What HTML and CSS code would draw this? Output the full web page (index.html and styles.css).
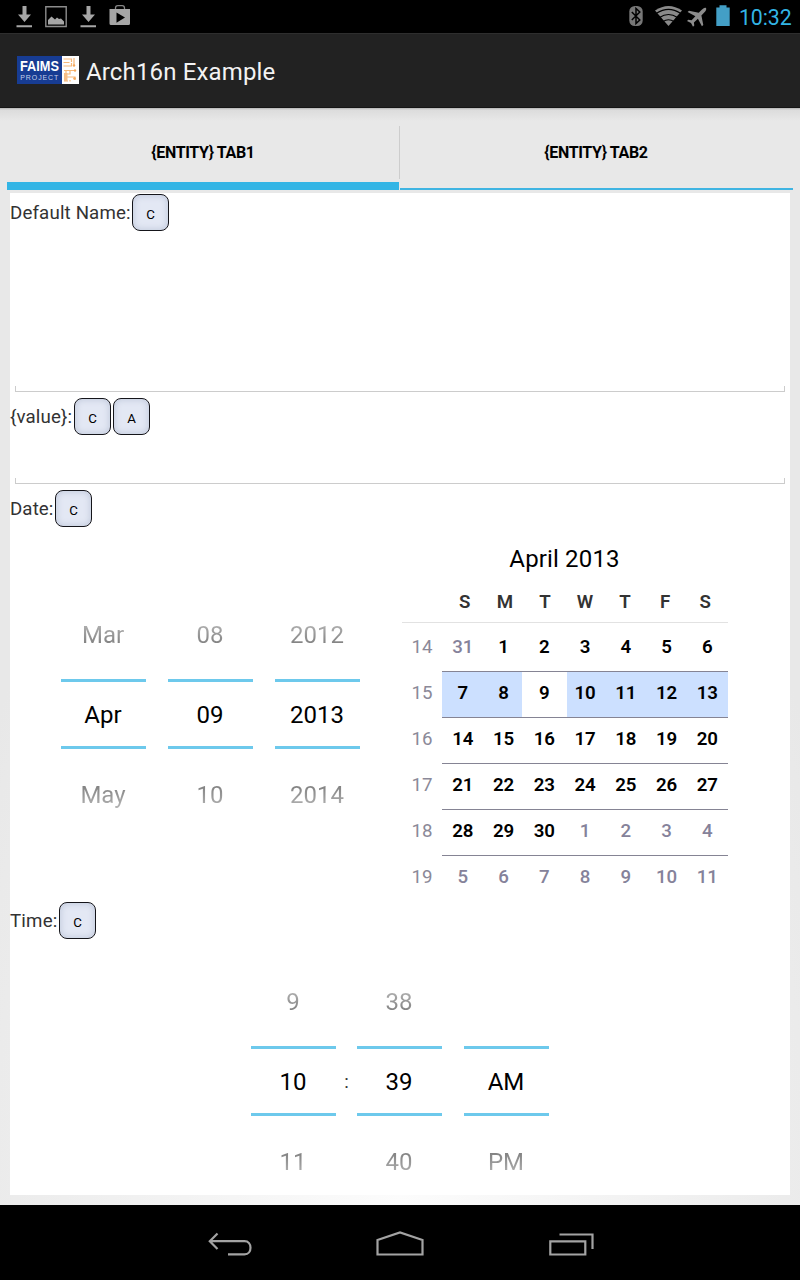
FILE: index.html
```
<!DOCTYPE html>
<html lang="en">
<head>
<meta charset="utf-8">
<title>Arch16n Example</title>
<link rel="stylesheet" href="styles.css">
</head>
<body>
<div class="screen">
  <header class="status">
    <svg class="status-left" width="140" height="33" viewBox="0 0 140 33" fill="#a6a6a6">
      <path d="M22.5 6h4v8.500H31L24.500 22 18 14.500h4.500zM16.500 25.300h15.500v2H16.500z"/>
      <path d="M86.500 6h4v8.500H95L88.500 22 82 14.500h4.500zM80.500 25.300h15.500v2H80.500z"/>
      <path d="M45.800 6.700h20.400v19.800H45.800z" fill="none" stroke="#8c8c8c" stroke-width="1.400"/>
      <path d="M48 24.500V20l3.500-3.500 3.500 3 2-2 2 1.500 2-.5 3 3v3z"/>
      <path d="M115.500 9.500V8q0-2.300 2.300-2.300h4.400q2.300 0 2.300 2.300v1.500" fill="none" stroke="#858585" stroke-width="1.300"/>
      <path fill-rule="evenodd" d="M109.500 9h20.500v14.500q0 1.500-1.500 1.500H111q-1.500 0-1.500-1.500zM116.500 12.500v10.300l8.500-5.200z"/>
    </svg>
    <div class="status-right">
      <svg width="110" height="33" viewBox="625 0 110 33">
        <rect x="629.300" y="6" width="13.400" height="20" rx="5.500" fill="#777"/>
        <path d="M631.800 12l8 8-3.800 3.500v-15l3.800 3.500-8 8" fill="none" stroke="#000" stroke-width="1.500"/>
        <path d="M655 10.500Q668.500 1.500 682 10.500L668.500 26z" fill="#8a8a8a"/>
        <path d="M656.500 13.300q12-8 24 0M659.500 17.500q9-6 18 0M663 21.500q5.500-3.500 11 0" fill="none" stroke="#000" stroke-width="1.200"/>
        <path d="M706 8c-1.300-1-3 .5-4.500 2l-2.800 2.700-9.700-2-1.400 1.400 7.800 4.100-3.800 4-3.300-.4-1.300 1.200 4 2 2 3.800 1.300-1.200-.4-3.200 4-3.700 4 7.600 1.400-1.300-1.900-9.500 2.800-2.900c1.400-1.500 2.700-3.300 1.800-4.600z" fill="#8c8c8c"/>
        <path d="M716.300 7.500h3.200V5.300h7v2.200h3.200V26h-13.400z" fill="#439fc6"/>
      </svg>
      <span class="clock">10:32</span>
    </div>
  </header>

  <div class="actionbar">
    <svg width="62" height="28" viewBox="0 0 62 28">
      <path fill="#173c93" d="M0 0h45v28H0z"/>
      <path fill="#fff" d="M45 0h17v28H45z"/>
      <text class="logo-main" x="3" y="14.800" textLength="39" lengthAdjust="spacingAndGlyphs">FAIMS</text>
      <text class="logo-sub" x="3.300" y="23.500" textLength="38">PROJECT</text>
      <path d="M46.500 3h8v3M46.500 6.500h6M46.500 10h8V7M57 2v8M49 14v11M47 14.500h11M47 18h6v-3M49 21h9v3M47 25h4M53 24v1.500" fill="none" stroke="#f7b878" stroke-width="1.200"/>
      <path d="M47 17h3.500v8H47z" fill="#f8bf86"/>
      <circle cx="57" cy="9.500" r="1.200" fill="#f5a85c"/><circle cx="58" cy="14.500" r="1.200" fill="#f5a85c"/><circle cx="57.500" cy="22.500" r="1.300" fill="#f5a85c"/>
    </svg>
    <span class="title">Arch16n Example</span>
  </div>

  <main class="content">
    <nav class="tabs">
      <div class="tab tab-active"><span>{ENTITY} TAB1</span></div>
      <div class="divider"></div>
      <div class="tab"><span>{ENTITY} TAB2</span></div>
    </nav>
    <section class="card">
      <div class="label-row"><span class="label label-name">Default Name:</span><span class="key">C</span></div>
      <div class="edit edit-tall"><div class="underline"></div></div>
      <div class="label-row"><span class="label label-value">{value}:</span><span class="key">C</span><span class="key">A</span></div>
      <div class="edit"><div class="underline"></div></div>
      <div class="label-row"><span class="label label-date">Date:</span><span class="key">C</span></div>

      <div class="date">
        <div class="pickers">
          <div class="picker"><div class="prev">Mar</div><div class="current">Apr</div><div class="next">May</div></div>
          <div class="picker"><div class="prev">08</div><div class="current">09</div><div class="next">10</div></div>
          <div class="picker"><div class="prev">2012</div><div class="current">2013</div><div class="next">2014</div></div>
        </div>
        <div class="calendar">
          <div class="month">April 2013</div>
          <div class="weekdays"><span></span><span>S</span><span>M</span><span>T</span><span>W</span><span>T</span><span>F</span><span>S</span></div>
          <div class="week"><b>14</b><div class="days"><i>31</i><span>1</span><span>2</span><span>3</span><span>4</span><span>5</span><span>6</span></div></div>
          <div class="week"><b>15</b><div class="days selected"><span>7</span><span>8</span><span>9</span><span>10</span><span>11</span><span>12</span><span>13</span></div></div>
          <div class="week"><b>16</b><div class="days"><span>14</span><span>15</span><span>16</span><span>17</span><span>18</span><span>19</span><span>20</span></div></div>
          <div class="week"><b>17</b><div class="days"><span>21</span><span>22</span><span>23</span><span>24</span><span>25</span><span>26</span><span>27</span></div></div>
          <div class="week"><b>18</b><div class="days"><span>28</span><span>29</span><span>30</span><i>1</i><i>2</i><i>3</i><i>4</i></div></div>
          <div class="week"><b>19</b><div class="days last"><i>5</i><i>6</i><i>7</i><i>8</i><i>9</i><i>10</i><i>11</i></div></div>
        </div>
      </div>

      <div class="label-row"><span class="label label-time">Time:</span><span class="key">C</span></div>
      <div class="time">
        <div class="picker"><div class="prev">9</div><div class="current">10</div><div class="next">11</div></div>
        <div class="colon">:</div>
        <div class="picker"><div class="prev">38</div><div class="current">39</div><div class="next">40</div></div>
        <div class="picker ampm"><div class="prev"></div><div class="current">AM</div><div class="next">PM</div></div>
      </div>
    </section>
  </main>

  <footer class="navbar">
    <svg width="800" height="75" viewBox="0 1205 800 75" fill="none" stroke="#a3a3a3" stroke-width="2.200">
      <path d="M217.500 1233.500l-7.700 7.700 7.700 7.800M210 1241.200h34.500c8 0 8 13.200 0 13.200H228"/>
      <path d="M377.500 1254.500V1240l22.500-7.500 22.500 7.500v14.500z"/>
      <path d="M550.300 1241.300h35v13.200h-35zM559.500 1234.500h33v14.500"/>
    </svg>
  </footer>
</div>
</body>
</html>
```
FILE: styles.css
```
* { box-sizing: border-box; }
body { margin: 0; font-family: Roboto, "Noto Sans", sans-serif; background: #000; }
svg { display: block; }
.screen { width: 800px; height: 1280px; display: flex; flex-direction: column; overflow: hidden; }

.status { height: 33px; display: flex; justify-content: space-between; background: #000; }
.status-right { display: flex; width: 175px; }
.clock { margin-left: 4px; font-size: 21.3px; line-height: 35px; letter-spacing: -0.1px; color: #33b5e5; white-space: nowrap; }

.actionbar { height: 75px; padding: 0 17px; display: flex; align-items: center; gap: 7px; background: #222; border-top: 1px solid #2e2e2e; border-bottom: 1px solid #151515; }
.actionbar svg { margin-bottom: 1px; }
.title { font-size: 24px; line-height: 30px; letter-spacing: 0.15px; color: #f3f3f3; white-space: nowrap; margin-top: 3px; }
.logo-main { font: 700 14.5px "Liberation Sans", sans-serif; fill: #fff; }
.logo-sub { font: 400 7px "Liberation Sans", sans-serif; fill: #c4cfea; }

.content { height: 1097px; padding: 0 7px; background: linear-gradient(#b5b5b5 0, #dcdcdc 2px, rgba(232,232,232,0) 13px), radial-gradient(ellipse 480px 900px at 50% 100%, #fcfcfc, #e8e8e8); }
.tabs { height: 82px; display: flex; }
.tab { width: 392px; display: flex; justify-content: center; padding-top: 34px; font-size: 16px; line-height: 22px; font-weight: 700; color: #000; border-bottom: 2px solid #3fb4e2; }
.tab:last-child { width: 393px; padding-right: 1px; }
.tab-active { border-bottom: 8px solid #33b5e5; }
.tab span { white-space: nowrap; letter-spacing: -0.35px; }
.divider { width: 1px; height: 53px; margin-top: 18px; background: #cdcdcd; }

.card { width: 780px; height: 1002px; margin: 3px; background: #fff; }
.label-row { height: 39px; display: flex; align-items: center; gap: 2px; }
.label { font-size: 18.7px; line-height: 24px; letter-spacing: 0.15px; color: #333; white-space: nowrap; }
.label-name { width: 120px; }
.label-value { width: 62px; letter-spacing: 0.15px; }
.label-date { width: 43px; letter-spacing: 0.1px; }
.label-time { width: 47px; letter-spacing: 0.2px; }
.key { width: 37px; height: 37px; border: 1.5px solid #15151a; border-radius: 8px; background: #e3e8f4; box-shadow: inset 0 0 6px 1px #c3cbdd; text-align: center; font-size: 13.3px; line-height: 39px; color: #000; }
.edit { height: 53px; padding: 0 5px 5px; display: flex; align-items: flex-end; }
.edit-tall { height: 165px; }
.underline { width: 770px; height: 6px; border: 1px solid #ccc; border-top: 0; }

.date { height: 373px; display: flex; }
.pickers { width: 392px; padding: 63px 0 0 51px; display: flex; gap: 22px; }
.picker { width: 85px; text-align: center; font-size: 24px; }
.prev, .next { padding-right: 1px; color: transparent; background-clip: text; -webkit-background-clip: text; }
.prev { height: 88px; line-height: 88px; background-image: linear-gradient(#ccc 25%, #777 65%); }
.next { height: 92px; line-height: 92px; background-image: linear-gradient(#777 35%, #ccc 75%); }
.current { height: 70px; padding-right: 1px; line-height: 66px; border: solid #6dc9ec; border-width: 3px 0; color: #000; }

.calendar { width: 326px; }
.month { height: 53px; padding: 15px 1px 0 0; font-size: 24px; line-height: 32px; letter-spacing: 0.15px; text-align: center; color: #000; }
.weekdays { height: 42px; display: grid; grid-template-columns: 42.7px repeat(7, 40.1px); border-bottom: 1px solid #e2e2e2; font-size: 18.7px; line-height: 42px; font-weight: 600; color: #333; text-align: center; }
.week { height: 46px; display: flex; font-size: 18.7px; line-height: 42px; text-align: center; }
.weekdays + .week { height: 49px; padding-top: 3px; }
.week b { width: 40px; font-weight: 400; color: #8b8998; }
.days { width: 286px; height: 46px; padding-left: 0.5px; display: grid; grid-template-columns: repeat(7, 40.75px); border-bottom: 1px solid #858494; color: #000; font-weight: 600; }
.days i { font-style: normal; color: #85829a; font-weight: 500; }
.selected { background: linear-gradient(90deg, #cce0ff 80px, #fff 80px, #fff 125px, #cce0ff 125px); }
.last { border-bottom: 0; }

.time { height: 255px; padding: 18px 0 0 241px; display: flex; }
.colon { width: 21px; padding-top: 112px; font-size: 18.7px; line-height: 24px; text-align: center; color: #333; }
.ampm { margin-left: 22px; }

.navbar { height: 75px; background: #000; }
```
